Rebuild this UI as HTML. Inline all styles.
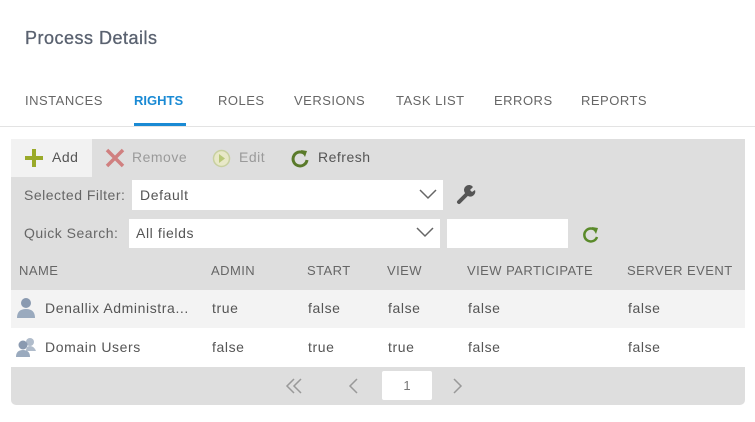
<!DOCTYPE html>
<html><head><style>
*{margin:0;padding:0;box-sizing:border-box}
body{width:755px;height:422px;background:#fff;font-family:"Liberation Sans",sans-serif;position:relative;overflow:hidden;color:#555}
.a{position:absolute;white-space:nowrap}
.tab{top:93px;font-size:13px;color:#666;letter-spacing:0.5px}
.hd{top:263px;font-size:13px;color:#666;letter-spacing:0.45px}
.c{font-size:14px;color:#555;letter-spacing:0.6px}
.t{font-size:14px;letter-spacing:0.5px}
</style></head><body>
<div class="a" style="left:25px;top:28px;font-size:18px;color:#5a6270;letter-spacing:0.5px;-webkit-text-stroke:0.3px #5a6270">Process Details</div>
<div class="a tab" style="left:25px">INSTANCES</div>
<div class="a tab" style="left:134px;color:#1a8ad4;font-weight:bold;letter-spacing:0">RIGHTS</div>
<div class="a tab" style="left:218px">ROLES</div>
<div class="a tab" style="left:294px">VERSIONS</div>
<div class="a tab" style="left:396px">TASK LIST</div>
<div class="a tab" style="left:494px">ERRORS</div>
<div class="a tab" style="left:581px">REPORTS</div>
<div class="a" style="left:134px;top:123px;width:52px;height:3px;background:#1a8ad4"></div>
<div class="a" style="left:0;top:126px;width:755px;height:1px;background:#e3e3e3"></div>

<div class="a" style="left:11px;top:139px;width:734px;height:266px;background:#dedede;border-radius:0 0 5px 5px"></div>
<div class="a" style="left:11px;top:139px;width:81px;height:38px;background:#f2f2f2"></div>
<svg class="a" style="left:24px;top:148px" width="20" height="20"><path d="M10 1v18M1 10h18" stroke="#9aaa2a" stroke-width="4"/></svg>
<div class="a t" style="left:52px;top:149px;color:#555">Add</div>
<svg class="a" style="left:105px;top:148px" width="20" height="20"><path d="M2 2l16 16M18 2L2 18" stroke="#d08080" stroke-width="3.5"/></svg>
<div class="a t" style="left:132px;top:149px;color:#9a9a9a">Remove</div>
<svg class="a" style="left:212px;top:149px" width="19" height="19"><circle cx="9.5" cy="9.5" r="8" fill="#e8e8c8" stroke="#c8d0a0" stroke-width="1.5"/><path d="M7 5l6 4.5L7 14z" fill="#b8c878"/></svg>
<div class="a t" style="left:239px;top:149px;color:#9a9a9a">Edit</div>
<svg class="a" style="left:290px;top:148px" width="20" height="20"><path d="M15 6A7 7 0 1 0 17 12" fill="none" stroke="#5a7a2a" stroke-width="3"/><path d="M11 2l6 1-2 6z" fill="#5a7a2a"/></svg>
<div class="a t" style="left:318px;top:149px;color:#555">Refresh</div>

<div class="a t" style="left:24px;top:187px;color:#666">Selected Filter:</div>
<div class="a" style="left:132px;top:180px;width:311px;height:30px;background:#fff"></div>
<div class="a c" style="left:140px;top:187px">Default</div>
<svg class="a" style="left:418px;top:188px" width="20" height="12"><path d="M2 2l8 8 8-8" fill="none" stroke="#666" stroke-width="1.5"/></svg>
<svg class="a" style="left:455px;top:184px" width="22" height="22"><path d="M4 18l8-8" stroke="#555" stroke-width="4" stroke-linecap="round"/><path d="M10 9a5 5 0 0 1 8-6l-3 3 2 2 3-2a5 5 0 0 1-7 6z" fill="#555"/></svg>

<div class="a t" style="left:24px;top:225px;color:#666">Quick Search:</div>
<div class="a" style="left:129px;top:219px;width:311px;height:29px;background:#fff"></div>
<div class="a c" style="left:136px;top:225px">All fields</div>
<svg class="a" style="left:415px;top:226px" width="20" height="12"><path d="M2 2l8 8 8-8" fill="none" stroke="#666" stroke-width="1.5"/></svg>
<div class="a" style="left:447px;top:219px;width:121px;height:29px;background:#fff"></div>
<svg class="a" style="left:581px;top:223px" width="20" height="22"><path d="M15 8A6.5 6.5 0 1 0 16 14" fill="none" stroke="#5a8a2a" stroke-width="2.5"/><path d="M11 4l6 1-2 6z" fill="#5a8a2a"/></svg>

<div class="a hd" style="left:19px">NAME</div>
<div class="a hd" style="left:211px">ADMIN</div>
<div class="a hd" style="left:307px">START</div>
<div class="a hd" style="left:387px">VIEW</div>
<div class="a hd" style="left:467px">VIEW PARTICIPATE</div>
<div class="a hd" style="left:627px">SERVER EVENT</div>

<div class="a" style="left:11px;top:290px;width:734px;height:38px;background:#f3f3f3"></div>
<div class="a" style="left:11px;top:328px;width:734px;height:39px;background:#fff"></div>
<svg class="a" style="left:16px;top:297px" width="20" height="22"><circle cx="10" cy="6" r="5" fill="#8a9ab0"/><path d="M1 21q0-9 9-9t9 9z" fill="#9aaabe"/></svg>
<div class="a c" style="left:45px;top:300px">Denallix Administra...</div>
<div class="a c" style="left:212px;top:300px">true</div>
<div class="a c" style="left:308px;top:300px">false</div>
<div class="a c" style="left:388px;top:300px">false</div>
<div class="a c" style="left:468px;top:300px">false</div>
<div class="a c" style="left:628px;top:300px">false</div>
<svg class="a" style="left:15px;top:337px" width="24" height="22"><circle cx="15" cy="5" r="4" fill="#b0bccb"/><path d="M11 14q0-5 4-5t6 5z" fill="#b0bccb"/><circle cx="8" cy="8" r="4.5" fill="#8a9ab0"/><path d="M1 20q0-7 7-7t7 7z" fill="#9aaabe"/></svg>
<div class="a c" style="left:45px;top:339px">Domain Users</div>
<div class="a c" style="left:212px;top:339px">false</div>
<div class="a c" style="left:308px;top:339px">true</div>
<div class="a c" style="left:388px;top:339px">true</div>
<div class="a c" style="left:468px;top:339px">false</div>
<div class="a c" style="left:628px;top:339px">false</div>

<svg class="a" style="left:284px;top:377px" width="22" height="18"><path d="M10 2L3 9l7 7M17 2l-7 7 7 7" fill="none" stroke="#999" stroke-width="1.5"/></svg>
<svg class="a" style="left:347px;top:377px" width="14" height="18"><path d="M10 2L3 9l7 7" fill="none" stroke="#999" stroke-width="1.5"/></svg>
<div class="a" style="left:382px;top:371px;width:50px;height:29px;background:#fff;border-radius:2px;font-size:13px;color:#777;text-align:center;line-height:29px">1</div>
<svg class="a" style="left:451px;top:377px" width="14" height="18"><path d="M3 2l7 7-7 7" fill="none" stroke="#999" stroke-width="1.5"/></svg>
</body></html>
